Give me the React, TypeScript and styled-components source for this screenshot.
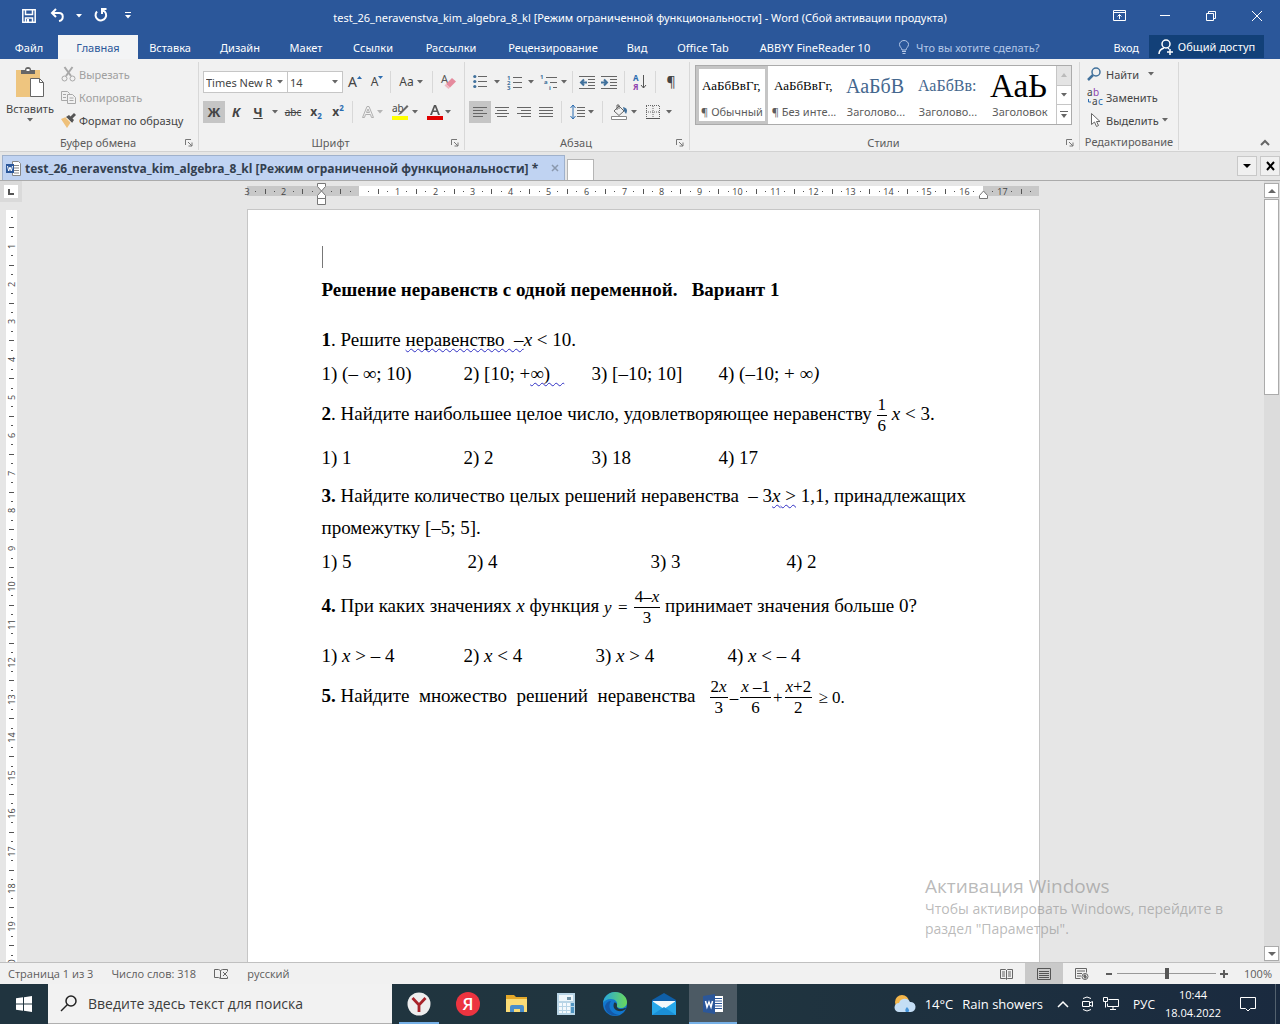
import React from 'react';
import styled, { createGlobalStyle } from 'styled-components';

const ui = '"Open Sans", "Noto Sans", sans-serif';
const chrome = '"Noto Sans", "Open Sans", sans-serif';
const serif = '"Liberation Serif", "Times New Roman", serif';

const Global = createGlobalStyle`
  * { box-sizing: border-box; }
  body { margin: 0; font-family: ${ui}; font-size: 12px; color: #444; }
  button, input, select { font: inherit; color: inherit; border: 0; margin: 0; padding: 0; background: none; }
  svg { display: block; flex: none; overflow: visible; }
`;

const Screen = styled.div`
  display: flex;
  flex-direction: column;
  height: 100vh;
  overflow: hidden;
  background: #e6e6e6;
  position: relative;
`;

/* ---------- title bar ---------- */
const TitleBar = styled.header`
  display: grid;
  grid-template-columns: 1fr auto 1fr;
  align-items: center;
  height: 35px;
  background: #2b579a;
  color: #fff;
`;
const QuickAccess = styled.div`
  display: flex;
  align-items: center;
  gap: 10px;
  padding: 0 0 4px 18px;
`;
const WindowButtons = styled.div`
  display: flex;
  justify-content: flex-end;
  padding-bottom: 4px;
`;
const PlainButton = styled.button<{ $w?: number }>`
  display: flex;
  align-items: center;
  justify-content: center;
  gap: 4px;
  width: ${p => (p.$w ? `${p.$w}px` : 'auto')};
  height: 24px;
`;
const WindowTitle = styled.h1`
  margin: 0;
  font-family: ${chrome};
  font-size: 11px;
  font-weight: 400;
  white-space: nowrap;
`;

/* ---------- ribbon tabs ---------- */
const TabBar = styled.nav`
  display: flex;
  height: 24px;
  background: #2b579a;
  color: #fff;
  font-family: ${chrome};
  font-size: 11px;
`;
const RibbonTab = styled.button<{ $active?: boolean; $w: number }>`
  width: ${p => p.$w}px;
  white-space: nowrap;
  background: ${p => (p.$active ? '#f3f4f5' : 'transparent')};
  color: ${p => (p.$active ? '#2b579a' : '#fff')};
`;
const TellMe = styled.label`
  display: flex;
  align-items: center;
  gap: 6px;
  flex: 1;
  padding-left: 16px;
  input { flex: 1; min-width: 0; }
  input::placeholder { color: #b4c7e7; opacity: 1; }
`;
const ShareButton = styled.button`
  display: flex;
  align-items: center;
  justify-content: center;
  gap: 4px;
  width: 115px;
  height: 23px;
  margin: 0 16px 0 10px;
  background: #124078;
  white-space: nowrap;
`;

/* ---------- ribbon ---------- */
const Ribbon = styled.div`
  display: flex;
  height: 93px;
  background: #f1f1f1;
  border-bottom: 1px solid #d2d2d2;
  font-family: ${chrome};
  font-size: 11px;
`;
const Group = styled.section<{ $w: number }>`
  display: flex;
  flex-direction: column;
  width: ${p => p.$w}px;
  margin: 3px 0 1px;
  border-right: 1px solid #d8d8d8;
`;
const GroupBody = styled.div<{ $column?: boolean }>`
  flex: 1;
  display: flex;
  flex-direction: ${p => (p.$column ? 'column' : 'row')};
  gap: ${p => (p.$column ? '8px' : '0')};
  padding: ${p => (p.$column ? '9px 0 0 4px' : '0')};
`;
const GroupFooter = styled.footer`
  display: grid;
  grid-template-columns: 12px 1fr 12px;
  align-items: center;
  height: 16px;
  padding-right: 2px;
  color: #5c5c5c;
  text-align: center;
  white-space: nowrap;
`;
const PlainFooter = styled.footer`
  height: 16px;
  line-height: 16px;
  color: #5c5c5c;
  text-align: center;
  white-space: nowrap;
`;
const PasteButton = styled.button`
  display: flex;
  flex-direction: column;
  align-items: center;
  gap: 2px;
  width: 60px;
  padding-top: 4px;
`;
const CommandList = styled.div`
  display: flex;
  flex-direction: column;
  justify-content: space-between;
  padding: 1px 0 3px 1px;
`;
const Command = styled.button<{ $off?: boolean }>`
  display: flex;
  align-items: center;
  gap: 3px;
  height: 22px;
  white-space: nowrap;
  color: ${p => (p.$off ? '#a0a0a0' : '#444')};
`;
const ToolRow = styled.div`
  display: flex;
  align-items: center;
  height: 22px;
`;
const Tool = styled.button<{ $w?: number; $on?: boolean }>`
  display: flex;
  align-items: center;
  justify-content: center;
  width: ${p => p.$w ?? 22}px;
  height: 22px;
  background: ${p => (p.$on ? '#c5c5c5' : 'transparent')};
`;
const Sep = styled.span<{ $m?: number }>`
  width: 1px;
  height: 22px;
  margin: 0 ${p => p.$m ?? 4}px;
  background: #d8d8d8;
`;
const SelectBox = styled.label<{ $w: number }>`
  display: flex;
  align-items: center;
  width: ${p => p.$w}px;
  height: 22px;
  padding: 0 4px 0 2px;
  background: #fff;
  border: 1px solid #c6c6c6;
  & + & { border-left: 0; }
  select { appearance: none; flex: 1; min-width: 0; height: 20px; outline: 0; }
`;
const Glyph = styled.span<{ $size?: number; $bold?: boolean; $italic?: boolean; $line?: string }>`
  font-size: ${p => p.$size ?? 13}px;
  line-height: 20px;
  font-weight: ${p => (p.$bold ? 700 : 400)};
  font-style: ${p => (p.$italic ? 'italic' : 'normal')};
  text-decoration: ${p => p.$line ?? 'none'};
  sub, sup { color: #2b6cb0; font-size: 8px; line-height: 0; }
`;
const Gallery = styled.div`
  display: flex;
  height: 60px;
  margin: 3px 0 0 5px;
  width: 377px;
  background: #fff;
  border: 1px solid #ababab;
`;
const StyleCard = styled.button<{ $on?: boolean }>`
  display: flex;
  flex-direction: column;
  width: 72px;
  white-space: nowrap;
  border: 3px solid ${p => (p.$on ? '#c5c5c5' : 'transparent')};
  align-items: center;
`;
const Sample = styled.span<{ $size: number; $color: string }>`
  display: flex;
  align-items: center;
  width: 60px;
  height: 34px;
  font-family: ${serif};
  font-size: ${p => p.$size}px;
  line-height: 34px;
  color: ${p => p.$color};
`;
const StyleName = styled.span`
  line-height: 18px;
  color: #5c5c5c;
`;
const GalleryScroll = styled.div`
  display: flex;
  flex-direction: column;
  flex: 1;
  border-left: 1px solid #c6c6c6;
  button { flex: 1; display: flex; align-items: center; justify-content: center; }
  button + button { border-top: 1px solid #c6c6c6; }
  button:first-child { background: #e4e4e4; }
`;
const Collapse = styled.button`
  align-self: flex-end;
  margin-left: auto;
  width: 30px;
  height: 18px;
  display: flex;
  align-items: center;
  justify-content: center;
`;

/* ---------- document tabs ---------- */
const DocTabs = styled.div`
  display: flex;
  align-items: flex-end;
  gap: 2px;
  height: 29px;
  padding-left: 2px;
  border-bottom: 1px solid #ababab;
`;
const DocTab = styled.button`
  display: flex;
  align-items: center;
  gap: 4px;
  width: 563px;
  height: 25px;
  padding: 0 5px 0 3px;
  background: #c0d3f2;
  border: 1px solid #9fb1cc;
  border-bottom: 0;
  color: #33404f;
  font-weight: 700;
  white-space: nowrap;
  svg:last-child { margin-left: auto; }
`;
const NewTab = styled.button`
  width: 27px;
  height: 21px;
  background: #fff;
  border: 1px solid #b5b5b5;
  border-bottom: 0;
`;
const TabActions = styled.div`
  display: flex;
  gap: 3px;
  align-self: center;
  margin-left: auto;
`;
const TabAction = styled.button`
  display: flex;
  align-items: center;
  justify-content: center;
  width: 20px;
  height: 20px;
  background: #f0f0f0;
  border: 1px solid #c8c8c8;
`;

/* ---------- workspace ---------- */
const Workspace = styled.div`
  flex: 1;
  min-height: 0;
  display: grid;
  grid-template-columns: 22px 1fr 16px;
`;
const LeftRail = styled.div`
  display: flex;
  flex-direction: column;
  align-items: center;
  overflow: hidden;
`;
const Corner = styled.button`
  display: flex;
  align-items: center;
  justify-content: center;
  flex: none;
  width: 22px;
  height: 21px;
  margin-bottom: 8px;
  background: #fff;
  border: 4px solid #dadada;
`;
const Canvas = styled.main`
  display: flex;
  flex-direction: column;
  align-items: center;
  min-width: 0;
  overflow: hidden;
`;
const RulerWrap = styled.div`
  flex: none;
  height: 28px;
`;
const Sheet = styled.article`
  flex: 1;
  width: 793px;
  max-width: 100%;
  padding: 32px 64px 0 74px;
  background: #fff;
  border: 1px solid #c6c6c6;
  border-bottom: 0;
  font-family: ${serif};
  font-size: 19px;
  color: #000;
`;
const Caret = styled.div`
  height: 22px;
  margin: 4px 0 6px;
  border-left: 1px solid #777;
`;
const Heading = styled.h2`
  margin: 0 0 18px;
  font-size: 19px;
  line-height: 32px;
  white-space: pre;
`;
const Line = styled.p<{ $gap?: number; $tall?: boolean }>`
  margin: ${p => p.$gap ?? 0}px 0 0;
  height: ${p => (p.$tall ? 40 : 32)}px;
  line-height: ${p => (p.$tall ? 40 : 32)}px;
  white-space: pre;
`;
const Options = styled.div<{ $gap: number; $cols: string }>`
  display: grid;
  grid-template-columns: ${p => p.$cols};
  margin-top: ${p => p.$gap}px;
  line-height: 32px;
  white-space: pre;
`;
const Wavy = styled.span`
  text-decoration: underline wavy #2f2fc4 1px;
  text-decoration-skip-ink: none;
  text-underline-offset: 2px;
`;
const Formula = styled.span`
  display: inline-flex;
  align-items: center;
  gap: 2px;
  vertical-align: middle;
  font-size: 17px;
  line-height: 20px;
`;
const FractionBox = styled.span`
  display: inline-flex;
  flex-direction: column;
  align-items: center;
  vertical-align: middle;
  font-size: 17px;
  line-height: 20px;
  span { padding: 0 1px; }
  span + span { border-top: 1px solid #000; align-self: stretch; text-align: center; }
`;
const ScrollRail = styled.div`
  display: flex;
  flex-direction: column;
  gap: 1px;
  padding: 2px 1px 1px 0;
  background: #dcdcdc;
`;
const ScrollButton = styled.button`
  display: flex;
  align-items: center;
  justify-content: center;
  height: 15px;
  background: #fff;
  border: 1px solid #ababab;
`;
const Thumb = styled.div`
  height: 196px;
  margin-bottom: auto;
  background: #fff;
  border: 1px solid #ababab;
`;
const Watermark = styled.aside`
  position: absolute;
  right: 50px;
  bottom: 85px;
  width: 305px;
  color: rgba(140, 140, 140, 0.6);
  font-size: 14px;
  line-height: 20px;
  pointer-events: none;
  strong { display: block; font-size: 19px; line-height: 26px; font-weight: 400; }
`;

/* ---------- status bar ---------- */
const StatusBar = styled.footer`
  display: flex;
  align-items: center;
  height: 22px;
  padding: 0 8px;
  gap: 18px;
  font-size: 11px;
  color: #5c5c5c;
  background: #f1f1f1;
  border-top: 1px solid #c0c0c0;
`;
const StatusRight = styled.div`
  display: flex;
  align-items: center;
  margin-left: auto;
  height: 100%;
`;
const ViewButton = styled.button<{ $on?: boolean }>`
  display: flex;
  align-items: center;
  justify-content: center;
  width: 38px;
  height: 21px;
  background: ${p => (p.$on ? '#c9c9c9' : 'transparent')};
`;
const ZoomButton = styled.button`
  display: flex;
  align-items: center;
  justify-content: center;
  width: 16px;
  height: 20px;
`;
const ZoomSlider = styled.input`
  appearance: none;
  width: 99px;
  height: 16px;
  &::-webkit-slider-runnable-track {
    height: 16px;
    background: linear-gradient(#999, #999) center / 100% 1px no-repeat;
  }
  &::-webkit-slider-thumb { appearance: none; width: 4px; height: 11px; margin-top: 2px; background: #555; }
`;
const ZoomValue = styled.span`
  width: 40px;
  text-align: right;
`;

/* ---------- taskbar ---------- */
const Taskbar = styled.footer`
  display: flex;
  align-items: stretch;
  flex: none;
  height: 40px;
  background: linear-gradient(90deg, #20343f, #20353f 55%, #1a2a3f);
  color: #fff;
`;
const TaskButton = styled.button<{ $open?: boolean; $on?: boolean }>`
  display: flex;
  align-items: center;
  justify-content: center;
  width: 48px;
  margin-right: 1px;
  background: ${p =>
    p.$on
      ? 'linear-gradient(#76b0e6, #76b0e6) bottom / 48px 2px no-repeat, #4c5a64'
      : p.$open
        ? 'linear-gradient(#76b0e6, #76b0e6) bottom / 40px 2px no-repeat'
        : 'none'};
`;
const StartButton = styled.button`
  display: flex;
  align-items: center;
  justify-content: center;
  width: 48px;
`;
const Search = styled.label`
  display: flex;
  align-items: center;
  gap: 11px;
  width: 344px;
  margin-right: 3px;
  padding-left: 12px;
  background: #f2f2f2;
  border-bottom: 1px solid #b0b0b0;
  color: #222;
  input { flex: 1; min-width: 0; font-size: 14px; }
  input::placeholder { color: #3c3c3c; opacity: 1; }
`;
const Tray = styled.div`
  display: flex;
  align-items: center;
  margin-left: auto;
`;
const Weather = styled.button`
  display: flex;
  align-items: center;
  gap: 9px;
  font-size: 13px;
  white-space: nowrap;
  padding-right: 8px;
`;
const Clock = styled.time`
  width: 56px;
  text-align: center;
  font-size: 11px;
  line-height: 18px;
`;
const Notifications = styled.button`
  display: flex;
  align-items: center;
  justify-content: center;
  width: 55px;
  height: 40px;
  border-right: 1px solid #53616e;
  margin-right: 4px;
`;

/* ---------- drawings ---------- */
type SvgProps = { w: number; h?: number; children: React.ReactNode; stroke?: string };
const Svg = ({ w, h = w, children, stroke = 'currentColor' }: SvgProps) => (
  <svg width={w} height={h} viewBox={`0 0 ${w} ${h}`} fill="none" stroke={stroke} aria-hidden="true">
    {children}
  </svg>
);
const Down = ({ color = '#666' }: { color?: string }) => (
  <Svg w={6} h={4} stroke="none"><path d="M0 0h6L3 3.5z" fill={color} /></Svg>
);
const Launcher = () => (
  <Svg w={9}><path d="M1.5 7V1.5H7M4 4l4 4M8 4.5V8H4.5" stroke="#777" /></Svg>
);

const Lines = ({ rows }: { rows: [number, number][] }) => (
  <Svg w={14} h={13}>
    {rows.map(([a, b], i) => <path key={i} d={`M${a} ${i * 3 + 1.5}H${b}`} stroke="#666" />)}
  </Svg>
);

const CM = 37.8;
const HorizontalRuler = () => {
  const zero = 112;
  const ticks: React.ReactNode[] = [];
  for (let q = -11; q <= 82; q++) {
    const x = Math.round(zero + (q * CM) / 4) + 0.5;
    if (q === 0 || q === -4 || q === 66 || x > 788) continue;
    if (q % 4 === 0) {
      ticks.push(<text key={q} x={x} y={9} textAnchor="middle" fontSize={9} fill="#444" stroke="none">{Math.abs(q / 4)}</text>);
    } else {
      const half = q % 2 === 0;
      ticks.push(<path key={q} d={`M${x} ${half ? 3 : 5}V${half ? 8 : 6}`} stroke="#555" />);
    }
  }
  return (
    <svg width={793} height={28} viewBox="0 0 793 28" fontFamily={ui} role="img" aria-label="Линейка">
      <path d="M0 5h112v10H0zM736 5h56v10h-56z" fill="#c8c8c8" />
      <path d="M112 5h624v10H112z" fill="#fff" />
      <g transform="translate(0 5)">
        {ticks}
        <text x={0} y={9} textAnchor="middle" fontSize={9} fill="#444">3</text>
      </g>
      <path d="M70.500 2.500h8v3l-4 4.500-4-4.500zM70.500 17.500v-3l4-4.500 4 4.500v3zM70.500 17.500h8v6h-8z" fill="#fff" stroke="#777" />
      <path d="M732.500 17.500v-3l4-4.500 4 4.500v3z" fill="#fff" stroke="#777" />
    </svg>
  );
};
const VerticalRuler = () => {
  const marks: React.ReactNode[] = [];
  for (let q = 1; q <= 130; q++) {
    const y = Math.round((q * CM) / 4 - 2) + 0.5;
    if (q % 4 === 0) {
      marks.push(
        <text key={q} transform={`translate(9 ${y}) rotate(-90)`} textAnchor="middle" fontSize={9} fill="#444">{q / 4}</text>
      );
    } else {
      const half = q % 2 === 0;
      marks.push(<path key={q} d={`M${half ? 3 : 5} ${y}H${half ? 8 : 7}`} stroke="#555" />);
    }
  }
  return (
    <svg width={11} height={1240} viewBox="0 0 11 1240" fontFamily={ui} role="img" aria-label="Вертикальная линейка">
      <path d="M0 0h11v1240H0z" fill="#fff" />
      {marks}
    </svg>
  );
};

const Fraction = ({ top, bottom }: { top: React.ReactNode; bottom: React.ReactNode }) => (
  <FractionBox><span>{top}</span><span>{bottom}</span></FractionBox>
);

const GroupFoot = ({ name }: { name: string }) => (
  <GroupFooter>
    <span />
    <span>{name}</span>
    <button aria-label={`${name}: параметры`}><Launcher /></button>
  </GroupFooter>
);

const tabs = [
  { name: 'Файл', w: 58 }, { name: 'Главная', w: 80, active: true }, { name: 'Вставка', w: 64 },
  { name: 'Дизайн', w: 76 }, { name: 'Макет', w: 56 }, { name: 'Ссылки', w: 78 }, { name: 'Рассылки', w: 78 },
  { name: 'Рецензирование', w: 126 }, { name: 'Вид', w: 42 }, { name: 'Office Tab', w: 90 }, { name: 'ABBYY FineReader 10', w: 134 },
];

const styles = [
  { sample: 'АаБбВвГг,', name: '¶ Обычный', size: 13, color: '#000', on: true },
  { sample: 'АаБбВвГг,', name: '¶ Без инте...', size: 13, color: '#000' },
  { sample: 'АаБбВ', name: 'Заголово...', size: 20, color: '#44678e' },
  { sample: 'АаБбВв:', name: 'Заголово...', size: 16, color: '#44678e' },
  { sample: 'АаЬ', name: 'Заголовок', size: 33, color: '#000' },
];

const Clipboard = () => (
  <Group $w={199}>
    <GroupBody>
      <PasteButton>
        <Svg w={30} h={33} stroke="none">
          <path d="M1 4h24v27H1z" fill="#eec57f" />
          <path d="M6 8V4h4a3 3 0 0 1 6 0h4v4z" fill="#666" />
          <path d="M11.500 3h3v2h-3z" fill="#fff" />
          <path d="M15.500 12.500h9l4 4v14h-13z" fill="#fff" stroke="#666" />
          <path d="M24.500 12.500v4h4" stroke="#666" />
        </Svg>
        <span>Вставить</span>
        <Down />
      </PasteButton>
      <CommandList>
        <Command $off>
          <Svg w={15}><path d="M3.500 0l6.500 9M11.500 0L5 9" stroke="#a8a8a8" strokeWidth={2} /><circle cx="3.500" cy="11.500" r="2.500" stroke="#a8a8a8" /><circle cx="11.500" cy="11.500" r="2.500" stroke="#a8a8a8" /></Svg>
          Вырезать
        </Command>
        <Command $off>
          <Svg w={15}><path d="M.5 1.500h6l2 2v7h-8zM2 4.500h3M2 7.500h3" stroke="#a8a8a8" /><path d="M6.500 4.500h5l3 3v6h-8zM8.500 8h4M8.500 10.500h4" stroke="#a8a8a8" fill="#f1f1f1" /></Svg>
          Копировать
        </Command>
        <Command>
          <Svg w={15} stroke="none"><path d="M0 6l5-2 5 5-4 6z" fill="#eec07a" /><path d="M5 4l3-2 5 5-2 3z" fill="#555" /><path d="M9 4l4-4 2 2-4 4z" fill="#555" /><path d="M5 4.500l5.500 5.500" stroke="#fff" /></Svg>
          Формат по образцу
        </Command>
      </CommandList>
    </GroupBody>
    <GroupFoot name="Буфер обмена" />
  </Group>
);

const FontGroup = () => (
  <Group $w={266}>
    <GroupBody $column>
      <ToolRow>
        <SelectBox $w={85}><select aria-label="Шрифт" defaultValue="tnr"><option value="tnr">Times New R</option></select><Down /></SelectBox>
        <SelectBox $w={55}><select aria-label="Размер" defaultValue="14"><option>14</option></select><Down /></SelectBox>
        <Tool $w={24} aria-label="Увеличить размер"><Glyph $size={14}>A</Glyph><Svg w={5} h={12}><path d="M0 3h5L2.500 0z" fill="#2b6cb0" stroke="none" /></Svg></Tool>
        <Tool $w={20} aria-label="Уменьшить размер"><Glyph $size={12}>A</Glyph><Svg w={5} h={12}><path d="M0 0h5L2.500 3z" fill="#2b6cb0" stroke="none" /></Svg></Tool>
        <Sep $m={3} />
        <Tool $w={34} aria-label="Регистр"><Glyph $size={12}>Aa</Glyph>&nbsp;<Down /></Tool>
        <Sep $m={4} />
        <Tool aria-label="Очистить формат">
          <Svg w={16} stroke="none"><text x="1" y="9" fontSize="11" fill="#555">A</text><path d="M6 10l6-6 4 3.500-6 6z" fill="#e58a9d" /><path d="M6 10l4 3.500-1.500 1.500-4-3.500z" fill="#f0b8c2" /></Svg>
        </Tool>
      </ToolRow>
      <ToolRow>
        <Tool $on><Glyph $bold>Ж</Glyph></Tool>
        <Tool><Glyph $bold $italic>К</Glyph></Tool>
        <Tool><Glyph $bold $line="underline">Ч</Glyph></Tool>
        <Tool $w={12} aria-label="Подчёркивание"><Down /></Tool>
        <Tool $w={24}><Glyph $size={10} $line="line-through">abc</Glyph></Tool>
        <Tool><Glyph $bold $size={12}>x<sub>2</sub></Glyph></Tool>
        <Tool><Glyph $bold $size={12}>x<sup>2</sup></Glyph></Tool>
        <Sep $m={3} />
        <Tool $w={32} aria-label="Текстовые эффекты"><Svg w={14}><path d="M1.500 12.500L6 1.500h2l4.500 11h-2l-1-3h-5l-1 3zM5.500 7.500h3L7 4z" stroke="#b0b0b0" /></Svg>&nbsp;<Down color="#b5b5b5" /></Tool>
        <Tool $w={34} aria-label="Цвет выделения">
          <Svg w={17} h={16} stroke="none"><text x="0" y="8" fontSize="10" fill="#444">ab</text><path d="M15 1l1.500 1.500L9 10l-3 1 1.500-2z" fill="#666" /><path d="M0 12h16v4H0z" fill="#ffff00" /></Svg>&nbsp;<Down />
        </Tool>
        <Tool $w={34} aria-label="Цвет текста">
          <Svg w={16} stroke="none"><path d="M3 11L7 1h2l4 10h-2l-1-3H6l-1 3zM6.600 6.500h2.800L8 3z" fill="#555" /><path d="M0 12h16v4H0z" fill="#e00000" /></Svg>&nbsp;<Down />
        </Tool>
      </ToolRow>
    </GroupBody>
    <GroupFoot name="Шрифт" />
  </Group>
);

const Paragraph = () => (
  <Group $w={225}>
    <GroupBody $column>
      <ToolRow>
        <Tool aria-label="Маркеры"><Svg w={14}>{[1, 6, 11].map(y => <g key={y}><circle cx="1.800" cy={y + 0.5} r="1.600" fill="#41719c" stroke="none" /><path d={`M5 ${y + 0.5}h9`} stroke="#666" /></g>)}</Svg></Tool>
        <Tool $w={12} aria-label="Вид маркеров"><Down /></Tool>
        <Tool aria-label="Нумерация"><Svg w={15} h={16}>{[1, 2, 3].map(n => <g key={n}><text x="0" y={n * 5 + 1} fontSize="6" fill="#41719c" stroke="none" fontWeight="700">{n}</text><path d={`M6 ${n * 5 - 1.5}h9`} stroke="#666" /></g>)}</Svg></Tool>
        <Tool $w={12} aria-label="Вид нумерации"><Down /></Tool>
        <Tool aria-label="Многоуровневый список"><Svg w={17} h={16}><g fill="#41719c" stroke="none" fontSize="6" fontWeight="700"><text x="0" y="5">1</text><text x="4" y="10">а</text><text x="9" y="16">i</text></g><path d="M6 3.500h11M10 8.500h7M13 13.500h4" stroke="#666" /></Svg></Tool>
        <Tool $w={10} aria-label="Вид списка"><Down /></Tool>
        <Sep $m={3} />
        <Tool aria-label="Уменьшить отступ"><Svg w={16} h={14}><path d="M0 1.500h16M9 4.500h7M9 7.500h7M9 10.500h7M0 13.500h16" stroke="#666" /><path d="M8 7.500H2M5 4.500l-3 3 3 3" stroke="#41719c" strokeWidth="2" /></Svg></Tool>
        <Tool aria-label="Увеличить отступ"><Svg w={16} h={14}><path d="M0 1.500h16M9 4.500h7M9 7.500h7M9 10.500h7M0 13.500h16" stroke="#666" /><path d="M0 7.500h6M3 4.500l3 3-3 3" stroke="#41719c" strokeWidth="2" /></Svg></Tool>
        <Sep $m={4} />
        <Tool aria-label="Сортировка"><Svg w={14} h={16}><g stroke="none" fontSize="8" fontWeight="700"><text x="0" y="7" fill="#2b6cb0">А</text><text x="0" y="16" fill="#8e44ad">Я</text></g><path d="M10.500 1v13M8 11l2.500 3 2.500-3" stroke="#555" /></Svg></Tool>
        <Sep $m={4} />
        <Tool aria-label="Все знаки"><Glyph $size={14}>¶</Glyph></Tool>
      </ToolRow>
      <ToolRow>
        <Tool $on aria-label="По левому краю"><Lines rows={[[0, 14], [0, 10], [0, 14], [0, 10]]} /></Tool>
        <Tool aria-label="По центру"><Lines rows={[[0, 14], [2, 12], [0, 14], [2, 12]]} /></Tool>
        <Tool aria-label="По правому краю"><Lines rows={[[0, 14], [4, 14], [0, 14], [4, 14]]} /></Tool>
        <Tool aria-label="По ширине"><Lines rows={[[0, 14], [0, 14], [0, 14], [0, 14]]} /></Tool>
        <Sep $m={4} />
        <Tool $w={32} aria-label="Интервал"><Svg w={15} h={16}><path d="M3 1v14M.5 4L3 1l2.500 3M.5 12L3 15l2.500-3" stroke="#2b6cb0" /><path d="M7 3.500h8M7 6.500h8M7 9.500h8M7 12.500h8" stroke="#666" /></Svg>&nbsp;<Down /></Tool>
        <Sep $m={4} />
        <Tool $w={34} aria-label="Заливка"><Svg w={17} h={16}><path d="M3 7l5-5 5 5-5 4.500zM6 6V1h2v4" stroke="#666" /><path d="M12 3c4 1 5 3 3 7l-2-3z" fill="#41719c" stroke="none" /><path d="M.5 12.500h15v3H.5z" fill="#fff" stroke="#888" /></Svg>&nbsp;<Down /></Tool>
        <Tool $w={36} aria-label="Границы"><Svg w={14}><path d="M.5 1v12M7 1v12M13.500 1v12M0 .5h14M0 7h14" stroke="#666" strokeDasharray="1 1" /><path d="M0 13.500h14" stroke="#555" /></Svg>&nbsp;&nbsp;<Down /></Tool>
      </ToolRow>
    </GroupBody>
    <GroupFoot name="Абзац" />
  </Group>
);

const Styles = () => (
  <Group $w={390}>
    <GroupBody>
      <Gallery>
        {styles.map((s, i) => (
          <StyleCard key={i} $on={s.on}>
            <Sample $size={s.size} $color={s.color}>{s.sample}</Sample>
            <StyleName>{s.name}</StyleName>
          </StyleCard>
        ))}
        <GalleryScroll>
          <button aria-label="Вверх"><Svg w={6} h={4} stroke="none"><path d="M0 4h6L3 0z" fill="#bbb" /></Svg></button>
          <button aria-label="Вниз"><Down /></button>
          <button aria-label="Ещё"><Svg w={8} h={7} stroke="none"><path d="M0 0h8v1H0zM1 3h6L4 7z" fill="#666" /></Svg></button>
        </GalleryScroll>
      </Gallery>
    </GroupBody>
    <GroupFoot name="Стили" />
  </Group>
);

const Editing = () => (
  <Group $w={99}>
    <GroupBody>
      <CommandList>
        <Command>
          <Svg w={22} h={15}><circle cx="15" cy="5" r="4" stroke="#41719c" strokeWidth="1.500" /><path d="M12 8l-5 5" stroke="#41719c" strokeWidth="2.500" /></Svg>
          Найти&nbsp;&nbsp;<Down />
        </Command>
        <Command>
          <Svg w={22} h={17} stroke="none"><g fontSize="10"><text x="6" y="7" fill="#444">a</text><text x="12" y="7" fill="#8e44ad">b</text><text x="11" y="16" fill="#444">a</text><text x="17" y="16" fill="#2b6cb0">c</text></g><path d="M7.500 10v3H10" stroke="#2b6cb0" /></Svg>
          Заменить
        </Command>
        <Command>
          <Svg w={22} h={16}><path d="M10.500 1.500v11l3-2.500 2 4.500 2-1-2-4h3.500z" stroke="#666" fill="#fff" /></Svg>
          Выделить<Down />
        </Command>
      </CommandList>
    </GroupBody>
    <PlainFooter>Редактирование</PlainFooter>
  </Group>
);

const X = () => <i>x</i>;

const Document = () => (
  <Sheet>
    <Caret />
    <Heading>{'Решение неравенств с одной переменной.   Вариант 1'}</Heading>
    <Line><b>1</b>. Решите <Wavy>{'неравенство  –'}</Wavy><X />{' < 10.'}</Line>
    <Options $gap={2} $cols="142px 128px 127px auto">
      <span>1) (– ∞; 10)</span><span>2) [10; +<Wavy>{'∞)   '}</Wavy></span><span>3) [–10; 10]</span><span>4) (–10; + ∞<i>)</i></span>
    </Options>
    <Line $gap={4} $tall><b>2</b>{'. Найдите наибольшее целое число, удовлетворяющее неравенству '}<Fraction top="1" bottom="6" />{' '}<X />{' < 3.'}</Line>
    <Options $gap={8} $cols="142px 128px 127px auto">
      <span>1) 1</span><span>2) 2</span><span>3) 18</span><span>4) 17</span>
    </Options>
    <Line $gap={6}><b>3.</b>{' Найдите количество целых решений неравенства  – 3'}<Wavy><X />{' >'}</Wavy> 1,1, принадлежащих</Line>
    <Line>промежутку [–5; 5].</Line>
    <Options $gap={2} $cols="146px 183px 136px auto">
      <span>1) 5</span><span>2) 4</span><span>3) 3</span><span>4) 2</span>
    </Options>
    <Line $gap={8} $tall>
      <b>4.</b> При каких значениях <X />{' функция '}
      <Formula><i>y</i> = <Fraction top={<>4–<X /></>} bottom="3" /></Formula>{' принимает значения больше 0?'}
    </Line>
    <Options $gap={14} $cols="142px 132px 132px auto">
      <span>1) <X />{' > – 4'}</span><span>2) <X />{' < 4'}</span><span>3) <X />{' > 4'}</span><span>4) <X />{' < – 4'}</span>
    </Options>
    <Line $gap={4} $tall>
      <b>5.</b>{' Найдите  множество  решений  неравенства   '}
      <Formula>
        <Fraction top={<>2<X /></>} bottom="3" />–<Fraction top={<><X /> –1</>} bottom="6" />+<Fraction top={<><X />+2</>} bottom="2" /> ≥ 0.
      </Formula>
    </Line>
  </Sheet>
);

export default function App() {
  return (
    <Screen>
      <Global />
      <TitleBar>
        <QuickAccess>
          <PlainButton $w={22} aria-label="Сохранить"><Svg w={14}><path d="M.8.800h12.400v12.400H.8zM3.500 1v4.500h7V1M3.500 13V9h7v4" strokeWidth="1.500" /><path d="M5 10h2v3H5z" fill="#fff" stroke="none" /></Svg></PlainButton>
          <PlainButton aria-label="Отменить"><Svg w={15}><path d="M6 1L2 5l4 4M2 5h7c5 0 5 7 0 8" strokeWidth="2" /></Svg>&nbsp;<Down color="#fff" /></PlainButton>
          <PlainButton $w={16} aria-label="Повторить"><Svg w={15}><path d="M4 3.500A5.300 5.300 0 1 0 10 2.300M13.500 1H9v5" strokeWidth="2" /></Svg></PlainButton>
          <PlainButton $w={20} aria-label="Настройка панели"><Svg w={6} h={7} stroke="none"><path d="M0 0h6v1H0zM0 3h6L3 6.500z" fill="#fff" /></Svg></PlainButton>
        </QuickAccess>
        <WindowTitle>test_26_neravenstva_kim_algebra_8_kl [Режим ограниченной функциональности] - Word (Сбой активации продукта)</WindowTitle>
        <WindowButtons>
          <PlainButton $w={46} aria-label="Параметры ленты"><Svg w={13} h={11}><path d="M.5.500h12v10H.5zM.5 2.500h12M6.500 9V4.500M4.500 6.500l2-2 2 2" /></Svg></PlainButton>
          <PlainButton $w={46} aria-label="Свернуть"><Svg w={10} h={1}><path d="M0 .5h10" /></Svg></PlainButton>
          <PlainButton $w={46} aria-label="Восстановить"><Svg w={10}><path d="M.5 2.500h7v7h-7zM2.500 2.500v-2h7v7h-2" /></Svg></PlainButton>
          <PlainButton $w={46} aria-label="Закрыть"><Svg w={10}><path d="M0 0l10 10M10 0L0 10" /></Svg></PlainButton>
        </WindowButtons>
      </TitleBar>
      <TabBar>
        {tabs.map(t => <RibbonTab key={t.name} $w={t.w} $active={t.active}>{t.name}</RibbonTab>)}
        <TellMe>
          <Svg w={12} h={15}><path d="M4 11.500h4M4.500 13.500h3M4 10C4 8 1.500 7 1.500 4.500a4.500 4 0 0 1 9 0C10.500 7 8 8 8 10z" stroke="#b4c7e7" /></Svg>
          <input aria-label="Помощник" placeholder="Что вы хотите сделать?" />
        </TellMe>
        <button>Вход</button>
        <ShareButton><Svg w={16}><circle cx="8" cy="5" r="4" strokeWidth="1.500" /><path d="M1 15c0-3 2-5 5-6M10 9l1 1M12 10v6M9 13h6" strokeWidth="1.500" /></Svg>Общий доступ</ShareButton>
      </TabBar>
      <Ribbon>
        <Clipboard />
        <FontGroup />
        <Paragraph />
        <Styles />
        <Editing />
        <Collapse aria-label="Свернуть ленту"><Svg w={10} h={7}><path d="M1 6l4-4 4 4" stroke="#666" strokeWidth="2" /></Svg></Collapse>
      </Ribbon>
      <DocTabs>
        <DocTab>
          <Svg w={15} h={15} stroke="none"><path d="M6.500 .5h6l2 2v12h-8z" fill="#fff" stroke="#888" /><path d="M8 4h5v1H8zM8 6.500h5v1H8zM8 9h5v1H8zM8 11.500h5v1H8z" fill="#888" /><path d="M0 3h8v9H0z" fill="#2b579a" /><path d="M1.500 5l1.200 5L4 6l1.300 4 1.200-5" stroke="#fff" fill="none" /></Svg>
          test_26_neravenstva_kim_algebra_8_kl [Режим ограниченной функциональности] *
          <Svg w={8}><path d="M1 1l6 6M7 1L1 7" stroke="#8a98ad" strokeWidth="1.500" /></Svg>
        </DocTab>
        <NewTab aria-label="Новая вкладка" />
        <TabActions>
          <TabAction aria-label="Список вкладок"><Svg w={8} h={4} stroke="none"><path d="M0 0h8L4 4z" fill="#000" /></Svg></TabAction>
          <TabAction aria-label="Закрыть вкладку"><Svg w={9} h={8}><path d="M1 0l7 8M8 0L1 8" stroke="#000" strokeWidth="2" /></Svg></TabAction>
        </TabActions>
      </DocTabs>
      <Workspace>
        <LeftRail>
          <Corner aria-label="Табуляция"><Svg w={6}><path d="M1 0v5h5" stroke="#555" strokeWidth="2" /></Svg></Corner>
          <VerticalRuler />
        </LeftRail>
        <Canvas>
          <RulerWrap><HorizontalRuler /></RulerWrap>
          <Document />
        </Canvas>
        <ScrollRail>
          <ScrollButton aria-label="Прокрутить вверх"><Svg w={8} h={4} stroke="none"><path d="M0 4h8L4 0z" fill="#666" /></Svg></ScrollButton>
          <Thumb />
          <ScrollButton aria-label="Прокрутить вниз"><Svg w={8} h={4} stroke="none"><path d="M0 0h8L4 4z" fill="#666" /></Svg></ScrollButton>
        </ScrollRail>
      </Workspace>
      <StatusBar>
        <span>Страница 1 из 3</span>
        <span>Число слов: 318</span>
        <Svg w={15} h={12}><path d="M6.500 10.500l-2-1h-4v-8h4l2 1zM6.500 2.500l2-1h5v2M6.500 10.500h7v-2M9 4l4 4M13 4L9 8" stroke="#666" /></Svg>
        <button>русский</button>
        <StatusRight>
          <ViewButton aria-label="Режим чтения"><Svg w={13} h={12}><path d="M6.500 11.500l-1-1h-5v-9h5l1 1 1-1h5v9h-5zM6.500 2v9M2 4h3M2 6h3M2 8h3M8 4h3M8 6h3M8 8h3" stroke="#666" /></Svg></ViewButton>
          <ViewButton $on aria-label="Разметка страницы"><Svg w={14} h={12}><path d="M.5.500h13v11H.5zM2 3.500h10M2 5.500h10M2 7.500h10M2 9.500h10" stroke="#555" /></Svg></ViewButton>
          <ViewButton aria-label="Веб-документ"><Svg w={14} h={12}><path d="M5.500 10.500h-5V.5h11v4M2 3h8M2 5.500h5M2 8h4" stroke="#666" /><circle cx="10" cy="8.500" r="3" stroke="#666" /><path d="M8 8l2-2 2 3-2 2z" fill="#666" stroke="none" /></Svg></ViewButton>
          <ZoomButton aria-label="Уменьшить"><Svg w={8}><path d="M1 4h6" strokeWidth="2" /></Svg></ZoomButton>
          <ZoomSlider type="range" aria-label="Масштаб" defaultValue={50} />
          <ZoomButton aria-label="Увеличить"><Svg w={8}><path d="M0 4h8M4 0v8" strokeWidth="2" /></Svg></ZoomButton>
          <ZoomValue>100%</ZoomValue>
        </StatusRight>
      </StatusBar>
      <Taskbar>
        <StartButton aria-label="Пуск">
          <Svg w={16} stroke="none"><path d="M0 2.300L7 1.300v6.200H0zM8 1.200L16 0v7.500H8zM0 8.500h7v6.200l-7-1zM8 8.500h8V16l-8-1.200z" fill="#fff" /></Svg>
        </StartButton>
        <Search>
          <Svg w={17}><circle cx="11" cy="6" r="5" strokeWidth="1.500" /><path d="M7.500 9.500L1 16" strokeWidth="1.500" /></Svg>
          <input aria-label="Поиск" placeholder="Введите здесь текст для поиска" />
        </Search>
        <TaskButton $open aria-label="Яндекс Браузер">
          <Svg w={24} stroke="none"><circle cx="12" cy="12" r="11.500" fill="#eee" /><path d="M5.500 6l6.500 7 6.500-7M12 12v8" stroke="#a8232a" strokeWidth="2.800" /></Svg>
        </TaskButton>
        <TaskButton aria-label="Яндекс">
          <Svg w={24} stroke="none"><circle cx="12" cy="12" r="12" fill="#ec3440" /><text x="12" y="18" textAnchor="middle" fontSize="17" fill="#fff" fontWeight="600">Я</text></Svg>
        </TaskButton>
        <TaskButton aria-label="Проводник">
          <Svg w={22} h={20} stroke="none"><path d="M0 1h8l2 2h11v15H0z" fill="#e5a92a" /><path d="M0 5h21v13H0z" fill="#fbdc76" /><path d="M4 18v-5q0-2 2-2h10q2 0 2 2v5h-4v-3H8v3z" fill="#4a8ecb" /></Svg>
        </TaskButton>
        <TaskButton aria-label="Калькулятор">
          <Svg w={18} h={22} stroke="none"><path d="M0 0h18v22H0z" fill="#b8d5e6" /><path d="M2 2h14v6H2z" fill="#eef7fb" /><path d="M10 4h4v3h-4z" fill="#6f93a8" /><path d="M2 10h3v3H2zM6 10h3v3H6zM10 10h3v3h-3zM2 14h3v3H2zM6 14h3v3H6zM10 14h3v3h-3zM2 18h3v2H2zM6 18h3v2H6zM10 18h3v2h-3z" fill="#f4fafd" /><path d="M14 10h3v3h-3zM14 14h3v6h-3z" fill="#4f93c0" /></Svg>
        </TaskButton>
        <TaskButton aria-label="Edge">
          <Svg w={24} stroke="none">
            <defs>
              <linearGradient id="edgeTop" x1="0" y1="0" x2="1" y2="0"><stop offset="0" stopColor="#27a6dc" /><stop offset="1" stopColor="#6bd95b" /></linearGradient>
            </defs>
            <circle cx="12" cy="12" r="12" fill="#1277cf" />
            <path d="M0 11C1 4 6 0 12 0c7 0 12 5 12 10 0 4-3 6-6 6-3 0-5-1-4-3 1-3-2-6-6-6-4 0-7 2-8 4z" fill="url(#edgeTop)" />
            <path d="M11 11c-2 5 2 9 8 8l4-2q0-1-1-1c-4 2-9 1-8-3 0-2-2-3-3-2z" fill="#20353f" />
            <path d="M8 9c-4 6 0 13 8 14-8 2-14-3-14-9 1-3 3-5 6-5z" fill="#1458a8" />
          </Svg>
        </TaskButton>
        <TaskButton aria-label="Почта">
          <Svg w={24} h={22} stroke="none"><path d="M0 7l12-7 12 7v15H0z" fill="#0f5fa8" /><path d="M1 8h22v8H1z" fill="#f3f8fb" /><path d="M0 8l12 8 12-8v14H0z" fill="#28a8ea" /><path d="M0 22l12-8 12 8z" fill="#1b8fd6" /></Svg>
        </TaskButton>
        <TaskButton $on aria-label="Word">
          <Svg w={20} stroke="none"><path d="M10 2h10v16H10z" fill="#fff" /><path d="M12 4.500h7M12 7h7M12 9.500h7M12 12h7M12 14.500h7" stroke="#2b579a" /><path d="M0 2l12-2v20L0 18z" fill="#2b579a" /><path d="M2.500 7l1.500 6 2-5 2 5 1.500-6" fill="none" stroke="#fff" strokeWidth="1.500" /></Svg>
        </TaskButton>
        <Tray>
          <Weather>
            <Svg w={22} h={18} stroke="none"><circle cx="8" cy="7" r="7" fill="#f4b64a" /><path d="M5 17a4.500 4.500 0 0 1 0-9 6 6 0 0 1 11-1 5 5 0 0 1 1 10z" fill="#c4def5" /><path d="M12 17c-2-2 1-5 1-5s4 4 1 5z" fill="#4595dc" /></Svg>
            <span>14°C</span><span>Rain showers</span>
          </Weather>
          <PlainButton $w={24} aria-label="Скрытые значки"><Svg w={12} h={7}><path d="M1 6l5-5 5 5" strokeWidth="1.500" /></Svg></PlainButton>
          <PlainButton $w={24} aria-label="Камера"><Svg w={12} h={16}><path d="M1.500 5.500h7v5h-7zM8.500 7l3-1.500v5L8.500 9M2 2.500q4-3 8 0M2 13.500q4 3 8 0" /></Svg></PlainButton>
          <PlainButton $w={24} aria-label="Сеть"><Svg w={16} h={14}><path d="M5.500 2.500h10v7h-11v-3M10 9.500v3M7 12.500h6M.5.500h4v4h-4zM2.500 4.500v6" /></Svg></PlainButton>
          <PlainButton $w={42}>РУС</PlainButton>
          <Clock>10:44<br />18.04.2022</Clock>
          <Notifications aria-label="Уведомления"><Svg w={16}><path d="M.5 1.500h15v11h-5l-2.500 2.500L5.500 12.500h-5z" /></Svg></Notifications>
        </Tray>
      </Taskbar>
      <Watermark><strong>Активация Windows</strong>Чтобы активировать Windows, перейдите в раздел "Параметры".</Watermark>
    </Screen>
  );
}
